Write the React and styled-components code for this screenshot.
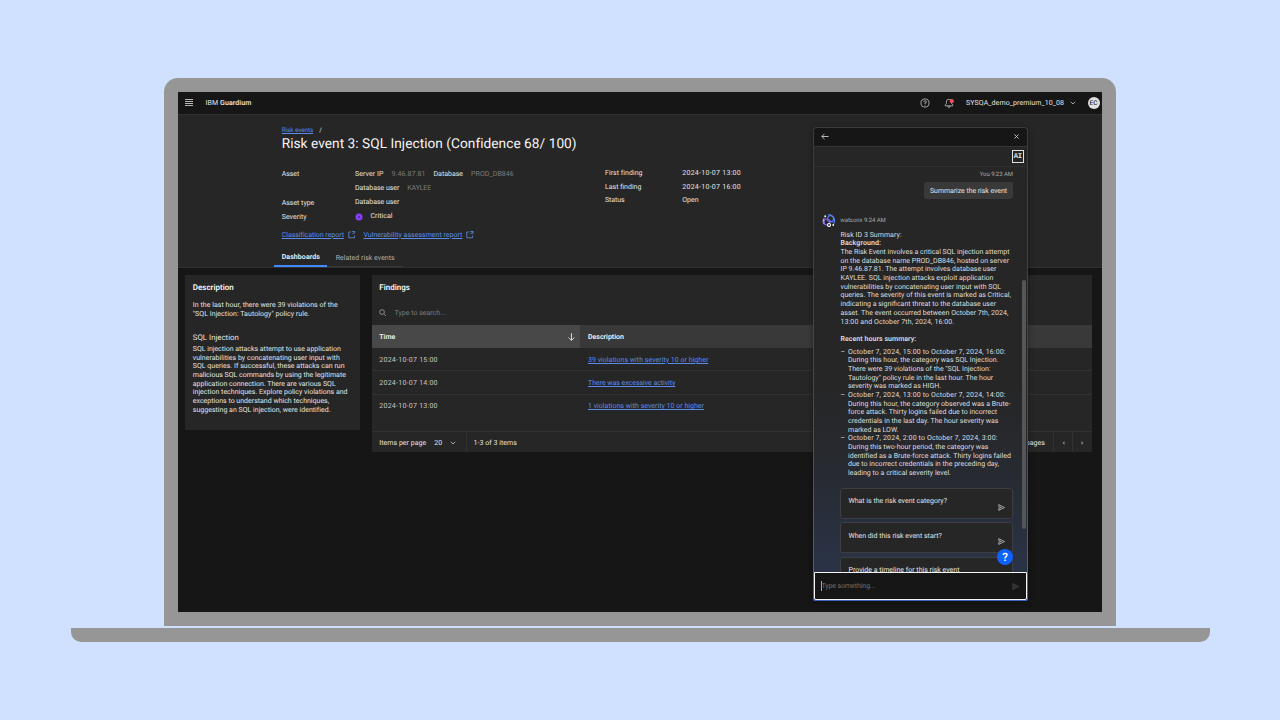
import React from 'react';
import styled, { createGlobalStyle, css } from 'styled-components';

const GlobalStyle = createGlobalStyle`
    *{
        box-sizing: border-box;
    }
    body{
        margin: 0;
        background: #cfe1ff;
        font-family: Roboto, 'Liberation Sans', sans-serif;
        text-rendering: geometricPrecision;
    }
`

/* Laptop */
const Desk = styled.div`
    display: flex;
    flex-direction: column;
    align-items: center;
    width: 1280px;
    height: 720px;
    padding-top: 78px;
    overflow: hidden;
`
const Lid = styled.div`
    width: 952px;
    height: 548px;
    padding: 14px;
    background: #969696;
    border-radius: 14px 14px 0 0;
`
const Base = styled.div`
    width: 1139px;
    height: 14px;
    margin-top: 2px;
    background: #969696;
    border-radius: 0 0 10px 10px;
`
const Screen = styled.div`
    position: relative;
    display: flex;
    flex-direction: column;
    width: 924px;
    height: 520px;
    background: #161616;
    color: #e4e4e4;
    font-size: 7px;
    line-height: 8.68px;
    overflow: hidden;
`

/* Type */
const Text = styled.span`
    white-space: nowrap;
    letter-spacing: ${p => p.$track || 0}px;
    ${p => p.$bold && css`font-weight: 600;`}
    ${p => p.$dim && css`color: #7c7c7c;`}
`
const Line = styled(Text)`
    display: block;
`
const Link = styled.a`
    color: #5b8de8;
    white-space: nowrap;
    text-decoration: underline;
    text-decoration-thickness: 0.7px;
    text-underline-offset: 1px;
    letter-spacing: ${p => p.$track || 0}px;
`

/* Top bar */
const TopBar = styled.header`
    display: flex;
    align-items: center;
    flex: none;
    height: 22.5px;
    padding: 0 2.5px 0 7px;
    border-bottom: 1px solid #323232;
    & > svg{
        margin-top: 0.5px;
    }
`
const Brand = styled.div`
    flex: 1;
    margin-left: 12.5px;
    padding-top: 1px;
    letter-spacing: 0.1px;
    b{
        font-weight: 600;
    }
`
const Tools = styled.div`
    display: flex;
    align-items: center;
`
const Bell = styled.span`
    display: flex;
    margin: 0 12px 0 14px;
`
const Tenant = styled(Text)`
    margin-right: 5.5px;
    padding-top: 1px;
`
const Avatar = styled.span`
    width: 12px;
    height: 12px;
    margin-left: 12px;
    border-radius: 50%;
    background: #e0e0e0;
    color: #393939;
    font-size: 6.5px;
    font-weight: 500;
    line-height: 12.5px;
    text-align: center;
`

/* Page header */
const PageHead = styled.section`
    flex: none;
    height: 153.5px;
    padding: 10px 0 0 103.7px;
    background: #262626;
    border-bottom: 1px solid #303030;
`
const Crumbs = styled.div`
    display: flex;
    gap: 6px;
    height: 10px;
    line-height: 10px;
    font-size: 6.4px;
`
const Title = styled.h1`
    margin: 0;
    height: 18px;
    line-height: 18px;
    font-size: 13.7px;
    font-weight: 400;
    letter-spacing: 0.03px;
    color: #f4f4f4;
    white-space: nowrap;
`
const Facts = styled.div`
    display: flex;
    height: 75.5px;
    padding-top: 14.5px;
`
const AssetGrid = styled.div`
    display: grid;
    grid-template-columns: 73.3px 250px;
    grid-template-rows: 15px 12px 16px 13.5px;
    align-items: center;
`
const FindingGrid = styled.div`
    display: grid;
    grid-template-columns: 77.3px 100px;
    grid-auto-rows: 13.5px;
    align-items: center;
`
const Pairs = styled.div`
    display: flex;
    gap: 8px;
    grid-column: 2;
`
const Severity = styled.div`
    display: flex;
    align-items: center;
    gap: 7.5px;
`
const Label = styled(Text)`
    padding-top: ${p => p.$drop || 0}px;
`
const Reports = styled.div`
    display: flex;
    align-items: center;
    gap: 8px;
    height: 14px;
    svg{
        margin: 0 0 0 -4px;
    }
`
const Tabs = styled.nav`
    display: flex;
    height: 25px;
    margin-left: -7.5px;
    padding-top: 6.5px;
`
const Tab = styled.div`
    display: flex;
    align-items: center;
    width: ${p => p.$width}px;
    padding: 2px 0 0 ${p => p.$active ? 7.5 : 8.5}px;
    border-bottom: ${p => p.$active ? '2px solid #4589ff' : '1px solid #393939'};
    color: ${p => p.$active ? '#f4f4f4' : '#b0b0b0'};
`

/* Dashboard */
const Board = styled.main`
    display: flex;
    align-items: flex-start;
    gap: 12px;
    padding: 6.5px 10px 0 7px;
`
const Card = styled.section`
    width: 175px;
    height: 155px;
    padding: 8px 7.8px;
    background: #262626;
`
const CardTitle = styled.h2`
    margin: 0;
    height: 10px;
    line-height: 10px;
    font-size: 8px;
    font-weight: 600;
    color: #f4f4f4;
`
const SubTitle = styled.h3`
    margin: 14.5px 0 2.2px;
    height: 10px;
    line-height: 10px;
    font-size: 7.8px;
    font-weight: 400;
    letter-spacing: 0.02px;
`
const Intro = styled.div`
    margin-top: 8.4px;
`
const Findings = styled.section`
    width: 720px;
    height: 177.5px;
    background: #262626;
`
const FindingsTop = styled.div`
    height: 50.5px;
    padding: 8px 7.3px 0;
`
const Search = styled.div`
    display: flex;
    align-items: center;
    gap: 7.8px;
    height: 12px;
    margin-top: 14.8px;
    color: #7c7c7c;
    svg{
        margin-top: -1px;
    }
    span{
        padding-top: 1px;
    }
`
const Row = styled.div`
    display: grid;
    grid-template-columns: 208px 1fr;
    height: ${p => p.$last ? 37.5 : 23.2}px;
    border-bottom: 1px solid #313131;
    color: #c6c6c6;
`
const HeadRow = styled(Row)`
    border: 0;
    background: #393939;
    color: #f4f4f4;
`
const Cell = styled.div`
    display: flex;
    align-items: center;
    justify-content: space-between;
    height: 23.2px;
    padding: 1px 5px 0 7.3px;
    ${p => p.$sorted && css`background: #484848;`}
    & + &{
        padding-left: 8px;
    }
`
const Pager = styled.div`
    display: flex;
    align-items: center;
    height: 19.9px;
    padding-left: 7.3px;
`
const PageSize = styled.div`
    display: flex;
    align-items: center;
    gap: 8px;
    width: 87px;
    padding-top: 2px;
`
const PageRange = styled.div`
    display: flex;
    align-items: center;
    flex: 1;
    height: 100%;
    padding: 2px 0 0 6.2px;
    border-left: 1px solid #313131;
`
const PageButton = styled.div`
    display: flex;
    align-items: center;
    justify-content: center;
    width: 19.6px;
    height: 100%;
    padding-top: 1px;
    border-left: 1px solid #313131;
`
const PageCount = styled(Text)`
    margin-right: 8px;
    padding-top: 2px;
`

/* Assistant */
const Assistant = styled.aside`
    position: absolute;
    left: 634.6px;
    top: 34.5px;
    display: flex;
    flex-direction: column;
    width: 215.8px;
    height: 474px;
    padding: 1px;
    border-radius: 4px 4px 2px 2px;
    background: linear-gradient(#3c3c3c 0%, #3c3d45 22%, #364567 45%, #35539a 75%, #3c66c0 100%);
    box-shadow: 0 1px 6px rgba(0, 0, 0, 0.35);
`
const AssistantBar = styled.div`
    display: flex;
    align-items: center;
    justify-content: space-between;
    flex: none;
    height: 19.5px;
    padding: 0 8px 0 7.3px;
    border-bottom: 1px solid #343434;
    border-radius: 3px 3px 0 0;
    background: #161616;
`
const LabelBar = styled.div`
    display: flex;
    align-items: center;
    justify-content: flex-end;
    flex: none;
    height: 20px;
    padding-right: 3.5px;
    border-bottom: 1px solid #303030;
    background: #262626;
`
const AiLabel = styled.span`
    width: 12.3px;
    height: 12.5px;
    border: 1px solid #e0e0e0;
    font: bold 7.2px/12px 'Liberation Mono', monospace;
    letter-spacing: -0.2px;
    text-align: center;
`
const Chat = styled.div`
    position: relative;
    flex: 1;
    min-height: 0;
    padding: 3.5px 14.4px 0 26.9px;
    overflow: hidden;
    background: linear-gradient(#262626 0%, #262626 52%, #272a31 75%, #2a3347 100%);
`
const ScrollThumb = styled.div`
    position: absolute;
    right: 1.2px;
    top: 113px;
    width: 4.3px;
    height: 248.5px;
    border-radius: 2px;
    background: #555657;
`
const Mine = styled.div`
    display: flex;
    flex-direction: column;
    align-items: flex-end;
    gap: 3px;
`
const Stamp = styled(Text)`
    font-size: 6px;
    color: #a8a8a8;
`
const Bubble = styled.div`
    height: 17px;
    padding: 0 6px;
    border-radius: 3px 1px 3px 3px;
    background: #393939;
    line-height: 18px;
`
const Author = styled.div`
    display: flex;
    align-items: center;
    gap: 4.8px;
    height: 14px;
    margin: 14.4px 0 3.1px -18.5px;
    ${Stamp}{
        padding-top: 1px;
    }
`
const Answer = styled.div`
    color: #dedede;
`
const Recent = styled.div`
    margin: 8.6px 0 4px;
`
const Bullet = styled.div`
    display: flex;
    &:before{
        content: '–';
        width: 7.5px;
    }
`
const Prompts = styled.div`
    display: flex;
    flex-direction: column;
    gap: 3.7px;
    margin-top: 9.8px;
`
const Prompt = styled.div`
    display: flex;
    justify-content: space-between;
    height: 31px;
    padding: 8.3px 7.5px 0 7px;
    border: 1px solid #3b3e43;
    border-radius: 3px;
    background: #262626;
    svg{
        margin-top: 6.6px;
    }
`
const Help = styled.div`
    position: absolute;
    left: 819px;
    top: 456.5px;
    width: 16px;
    height: 16px;
    border-radius: 50%;
    background: #0f62fe;
    color: #fff;
    font-size: 11.5px;
    font-weight: 600;
    line-height: 16px;
    text-align: center;
`
const Composer = styled.div`
    display: flex;
    align-items: center;
    justify-content: space-between;
    flex: none;
    height: 27.5px;
    padding: 1px 7.5px 0 6.8px;
    border: 1px solid #f4f4f4;
    border-radius: 0 0 2px 2px;
    background: #161616;
    color: #6f6f6f;
`
const Field = styled.div`
    padding: 1px 0 0;
    border-left: 1px solid #a8a8a8;
    span{
        margin-left: -1px;
    }
`

const MenuIcon = () => (
    <svg width="8" height="8" viewBox="0 0 8 8" stroke="#c8c8c8" strokeWidth="0.9">
        <path d="M0 0.500h8M0 2.500h8M0 4.500h8M0 6.500h8" />
    </svg>
)
const HelpIcon = () => (
    <svg width="10" height="10" viewBox="0 0 32 32" fill="none" stroke="#d0d0d0" strokeWidth="2.4">
        <circle cx="16" cy="16" r="13" />
        <path d="M12 13v-1a3 3 0 0 1 3-3h2a3.3 3.3 0 0 1 0 6.700h-1v3.500M16 21.500v3" />
    </svg>
)
const BellIcon = () => (
    <svg width="10" height="10" viewBox="0 0 32 32" fill="none" stroke="#d0d0d0" strokeWidth="2.3">
        <path d="M16 4a8.500 8.500 0 0 0-8.500 8.500v5.500L4 21.500V25h24v-3.500L24.500 18v-5.500A8.500 8.500 0 0 0 16 4zM12 25v1a4 4 0 0 0 8 0v-1" />
        <circle cx="25" cy="10" r="6.5" fill="#fa4d56" stroke="none" />
    </svg>
)
const Chevron = () => (
    <svg width="6" height="4" viewBox="0 0 6 4" fill="none" stroke="#c6c6c6" strokeWidth="0.8">
        <path d="M0.8 0.800L3 3 5.200 0.800" />
    </svg>
)
const Launch = () => (
    <svg width="7.500" height="7.500" viewBox="0 0 30 30" fill="none" stroke="#6b9df5" strokeWidth="2.800">
        <path d="M12 4H3v23h23v-9M17 2h11v11M28 2L17 13" />
    </svg>
)
const Critical = () => (
    <svg width="8" height="8" viewBox="0 0 16 16">
        <circle cx="8" cy="8" r="7" fill="#8a3ffc" />
        <path d="M5.200 5.200l5.600 5.600M10.800 5.200l-5.600 5.600" stroke="#4a2390" strokeWidth="1.500" />
    </svg>
)
const SearchIcon = () => (
    <svg width="7.500" height="7.500" viewBox="0 0 16 16" fill="none" stroke="#b0b0b0" strokeWidth="1.500">
        <circle cx="6.500" cy="6.500" r="5" />
        <path d="M10.200 10.200L15 15" />
    </svg>
)
const SortDown = () => (
    <svg width="7" height="8" viewBox="0 0 7 8" fill="none" stroke="#e8e8e8" strokeWidth="0.900">
        <path d="M3.500 0.200v7M0.600 4.600l2.900 2.800 2.900-2.800" />
    </svg>
)
const BackIcon = () => (
    <svg width="8" height="7" viewBox="0 0 8 7" fill="none" stroke="#e0e0e0" strokeWidth="0.800">
        <path d="M0.800 3.500h6.800M3.500 0.800L0.800 3.500l2.700 2.700" />
    </svg>
)
const CloseIcon = () => (
    <svg width="5" height="5" viewBox="0 0 5 5" stroke="#e0e0e0" strokeWidth="0.800">
        <path d="M0.500 0.500l4 4M4.500 0.500l-4 4" />
    </svg>
)
const Caret = ({ left }) => (
    <svg width="3" height="4" viewBox="0 0 3 4" fill="#8d8d8d">
        <path d={left ? 'M2.500 0.300v3.400L0.500 2z' : 'M0.500 0.300v3.400L2.500 2z'} />
    </svg>
)
const Send = ({ color }) => (
    <svg width="7" height="7" viewBox="0 0 14 14" fill="none" stroke={color} strokeWidth="1.500">
        <path d="M1.500 1.200L13 7 1.500 12.800V8.600L7 7 1.500 5.400z" />
    </svg>
)
const Watsonx = () => (
    <svg width="13.500" height="13.500" viewBox="0 0 27 27" fill="none" strokeWidth="2.200">
        <circle cx="17" cy="9.500" r="6" stroke="#4c7df0" />
        <circle cx="10" cy="16" r="6" stroke="#8b62e8" />
        <path d="M5 7.500C1.500 12 1.500 17 4.500 20.500" stroke="#a68af5" />
        <path d="M12 2c6-1.500 12 3 13 9 .400 3-.200 6-1.800 8.500" stroke="#5b8cf5" />
        <path d="M13 16.500c2-2.500 6-2.500 8 0" stroke="#7c6af0" />
        <circle cx="14" cy="22" r="3" stroke="#fff" fill="#262626" />
        <circle cx="6.500" cy="4.500" r="1.900" fill="#fff" />
        <circle cx="22.500" cy="22" r="1.800" fill="#fff" />
        <circle cx="3.500" cy="12.500" r="1.200" fill="#fff" />
    </svg>
)

// every line carries its own tracking
const about = [
    ['SQL injection attacks attempt to use application', -0.019],
    ['vulnerabilities by concatenating user input with', 0.03],
    ['SQL queries. If successful, these attacks can run', 0.02],
    ['malicious SQL commands by using the legitimate', -0.01],
    ['application connection. There are various SQL', 0.01],
    ['injection techniques. Explore policy violations and', 0.009],
    ['exceptions to understand which techniques,', 0],
    ['suggesting an SQL injection, were identified.', 0.01],
]
const background = [
    ['The Risk Event involves a critical SQL injection attempt', -0.01],
    ['on the database name PROD_DB846, hosted on server', 0.008],
    ['IP 9.46.87.81. The attempt involves database user', 0.01],
    ['KAYLEE. SQL injection attacks exploit application', 0.01],
    ['vulnerabilities by concatenating user input with SQL', 0.01],
    ['queries. The severity of this event is marked as Critical,', 0.002],
    ['indicating a significant threat to the database user', 0],
    ['asset. The event occurred between October 7th, 2024,', 0.02],
    ['13:00 and October 7th, 2024, 16:00.', 0.1],
]
const hours = [
    [
        ['October 7, 2024, 15:00 to October 7, 2024, 16:00:', 0.138],
        ['During this hour, the category was SQL Injection.', 0.01],
        ['There were 39 violations of the "SQL Injection:', 0],
        ['Tautology" policy rule in the last hour. The hour', 0.01],
        ['severity was marked as HIGH.', 0],
    ],
    [
        ['October 7, 2024, 13:00 to October 7, 2024, 14:00:', 0.138],
        ['During this hour, the category observed was a Brute-', 0.02],
        ['force attack. Thirty logins failed due to incorrect', 0.01],
        ['credentials in the last day. The hour severity was', 0.01],
        ['marked as LOW.', 0.02],
    ],
    [
        ['October 7, 2024, 2:00 to October 7, 2024, 3:00:', 0.138],
        ['During this two-hour period, the category was', 0],
        ['identified as a Brute-force attack. Thirty logins failed', 0.015],
        ['due to incorrect credentials in the preceding day,', 0.02],
        ['leading to a critical severity level.', 0.02],
    ],
]
const findings = [
    ['2024-10-07 15:00', '39 violations with severity 10 or higher', 0.029],
    ['2024-10-07 14:00', 'There was excessive activity', -0.036],
    ['2024-10-07 13:00', '1 violations with severity 10 or higher', 0.02],
]
const prompts = [
    ['What is the risk event category?', -0.003],
    ['When did this risk event start?', 0],
    ['Provide a timeline for this risk event', 0.004],
]

const Lines = ({ of }) => of.map(([text, track]) => <Line key={text} $track={track}>{text}</Line>)

function Header() {
    return (
        <TopBar>
            <MenuIcon />
            <Brand>IBM <b>Guardium</b></Brand>
            <Tools>
                <HelpIcon />
                <Bell><BellIcon /></Bell>
                <Tenant $track={0.092}>SYSQA_demo_premium_10_08</Tenant>
                <Chevron />
                <Avatar>EC</Avatar>
            </Tools>
        </TopBar>
    )
}

function EventHead() {
    return (
        <PageHead>
            <Crumbs><Link $track={-0.08}>Risk events</Link><span>/</span></Crumbs>
            <Title>Risk event 3: SQL Injection (Confidence 68/ 100)</Title>
            <Facts>
                <AssetGrid>
                    <Text $track={-0.05}>Asset</Text>
                    <Pairs>
                        <Text $track={0.078}>Server IP</Text>
                        <Text $dim $track={0.092}>9.46.87.81</Text>
                        <Text>Database</Text>
                        <Text $dim $track={0.074}>PROD_DB846</Text>
                    </Pairs>
                    <Pairs>
                        <Text $track={-0.04}>Database user</Text>
                        <Text $dim $track={-0.15}>KAYLEE</Text>
                    </Pairs>
                    <Label $drop={2} $track={-0.018}>Asset type</Label>
                    <Text $track={-0.04}>Database user</Text>
                    <Label $drop={1.5} $track={0.055}>Severity</Label>
                    <Severity><Critical /><Text $track={0.025}>Critical</Text></Severity>
                </AssetGrid>
                <FindingGrid>
                    <Text $track={0.04}>First finding</Text>
                    <Text $track={0.262}>2024-10-07 13:00</Text>
                    <Text>Last finding</Text>
                    <Text $track={0.262}>2024-10-07 16:00</Text>
                    <Text $track={-0.053}>Status</Text>
                    <Text>Open</Text>
                </FindingGrid>
            </Facts>
            <Reports>
                <Link $track={-0.034}>Classification report</Link>
                <Launch />
                <Link $track={0.019}>Vulnerability assessment report</Link>
                <Launch />
            </Reports>
            <Tabs>
                <Tab $active $width={53}><Text $bold $track={0.082}>Dashboards</Text></Tab>
                <Tab $width={76}><Text $track={0.016}>Related risk events</Text></Tab>
            </Tabs>
        </PageHead>
    )
}

function Dashboard() {
    return (
        <Board>
            <Card>
                <CardTitle>Description</CardTitle>
                <Intro>
                    <Line $track={0.045}>In the last hour, there were 39 violations of the</Line>
                    <Line $track={0.05}>"SQL Injection: Tautology" policy rule.</Line>
                </Intro>
                <SubTitle>SQL Injection</SubTitle>
                <Lines of={about} />
            </Card>
            <Findings>
                <FindingsTop>
                    <CardTitle>Findings</CardTitle>
                    <Search><SearchIcon /><Text>Type to search...</Text></Search>
                </FindingsTop>
                <HeadRow>
                    <Cell $sorted><Text $bold>Time</Text><SortDown /></Cell>
                    <Cell><Text $bold>Description</Text></Cell>
                </HeadRow>
                {findings.map(([time, text, track], i) => (
                    <Row key={time} $last={i === findings.length - 1}>
                        <Cell><Text $track={0.25}>{time}</Text></Cell>
                        <Cell><Link $track={track}>{text}</Link></Cell>
                    </Row>
                ))}
                <Pager>
                    <PageSize>
                        <Text $track={0.033}>Items per page</Text>
                        <Text>20</Text>
                        <Chevron />
                    </PageSize>
                    <PageRange><Text $track={0.034}>1-3 of 3 items</Text></PageRange>
                    <PageCount>1 of 1 pages</PageCount>
                    <PageButton><Caret left /></PageButton>
                    <PageButton><Caret /></PageButton>
                </Pager>
            </Findings>
        </Board>
    )
}

function AssistantPanel() {
    return (
        <Assistant>
            <AssistantBar><BackIcon /><CloseIcon /></AssistantBar>
            <LabelBar><AiLabel>AI</AiLabel></LabelBar>
            <Chat>
                <Mine>
                    <Stamp $track={-0.05}>You 9:23 AM</Stamp>
                    <Bubble><Text $track={-0.063}>Summarize the risk event</Text></Bubble>
                </Mine>
                <Author><Watsonx /><Stamp $track={-0.05}>watsonx 9:24 AM</Stamp></Author>
                <Answer>
                    <Line $track={0.036}>Risk ID 3 Summary:</Line>
                    <Line $bold $track={0.089}>Background:</Line>
                    <Lines of={background} />
                    <Recent><Line $bold $track={0.05}>Recent hours summary:</Line></Recent>
                    {hours.map((lines, i) => (
                        <Bullet key={i}><div><Lines of={lines} /></div></Bullet>
                    ))}
                </Answer>
                <Prompts>
                    {prompts.map(([text, track]) => (
                        <Prompt key={text}><Text $track={track}>{text}</Text><Send color="#c6c6c6" /></Prompt>
                    ))}
                </Prompts>
                <ScrollThumb />
            </Chat>
            <Composer>
                <Field><Text $track={-0.08}>Type something...</Text></Field>
                <Send color="#525252" />
            </Composer>
        </Assistant>
    )
}

function App() {
    return (
        <>
            <GlobalStyle />
            <Desk>
                <Lid>
                    <Screen>
                        <Header />
                        <EventHead />
                        <Dashboard />
                        <AssistantPanel />
                        <Help>?</Help>
                    </Screen>
                </Lid>
                <Base />
            </Desk>
        </>
    )
}

export default App
